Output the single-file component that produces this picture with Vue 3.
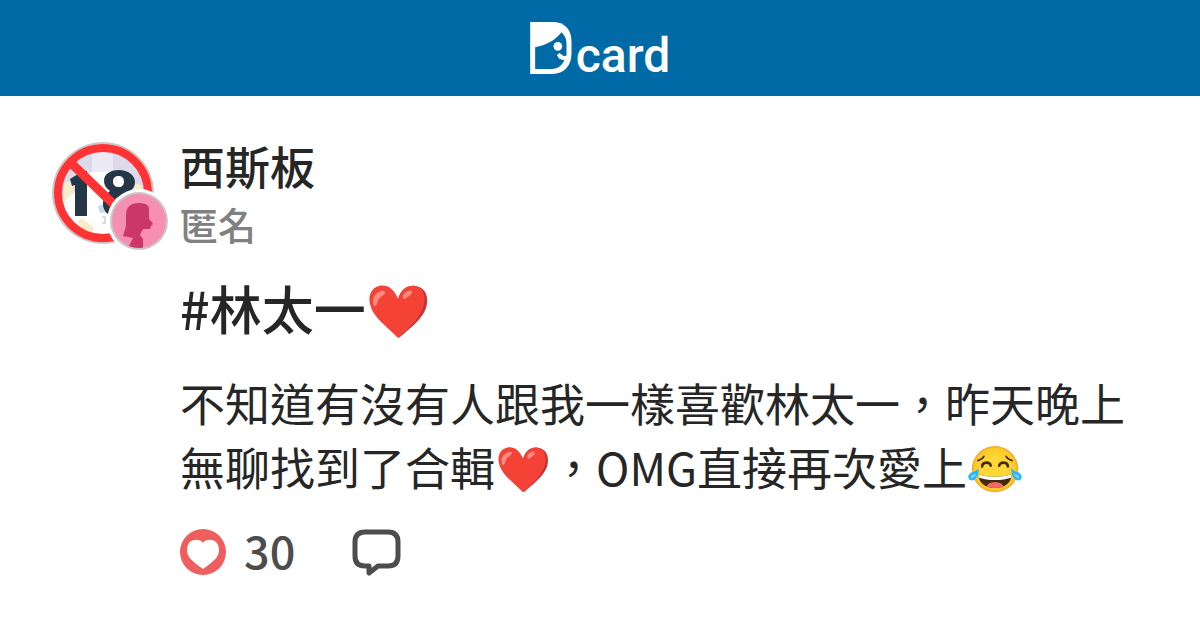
<script setup>
import { ref } from 'vue'

const post = {
  forum: '西斯板',
  author: '匿名',
  title: '#林太一',
  lead: '不知道有沒有人跟我一樣喜歡林太一，昨天晚上無聊找到了合輯',
  rest: '，OMG直接再次愛上',
}
const likes = ref(30)
</script>

<template>
  <div class="page">
    <header class="topbar">
      <a class="brand" href="#" aria-label="Dcard">
        <svg class="mark" viewBox="34 36 125 156" aria-hidden="true">
          <path fill="#fff" d="M34 36H100C138 36 158 58 158 95V130C158 168 136 192 100 192H34Z" />
          <path fill="#006aa6" d="M49 112C82 106 108 92 128 67C138 76 143 87 143 102V137L134 138L122 129L114 135L121 146L136 151C130 167 117 177 99 177H49Z" />
          <circle cx="117" cy="109" r="13" fill="#fff" />
        </svg>
        <span class="wordmark">card</span>
      </a>
    </header>

    <main class="post">
      <div class="avatar">
        <svg class="forum-icon" viewBox="0 0 102 102" aria-hidden="true">
          <defs>
            <clipPath id="forum-clip"><circle cx="51" cy="51" r="46" /></clipPath>
          </defs>
          <circle cx="51" cy="51" r="51" fill="#c8c8ca" />
          <circle cx="51" cy="51" r="49" fill="#fff" />
          <g clip-path="url(#forum-clip)">
            <path fill="#dcdaea" d="M0 0H102V52H76L60 34L35 38L21 52L0 62Z" />
            <path fill="#eceaf6" d="M40 0H61V30H40Z" />
            <path fill="#fff" d="M20 54L38 30H64L76 44L72 92H20L8 64Z" />
            <path fill="#f7edc8" d="M12 41L20 39L22 50L12 60ZM82 40L90 44L89 55L80 51ZM25 80L30 76L42 86L40 92L29 94Z" />
            <path fill="#c9d8e8" d="M46 64L52 62L57 70L48 71Z" />
            <path fill="none" stroke="#dcdcde" stroke-width="2" d="M50 75H53V81H50" />
          </g>
          <path fill="#243746" d="M31 29H35V74H23V43L20 44L18 37Z" />
          <path fill="#243746" fill-rule="evenodd" d="M67 28C76 28 83 33 83 40C83 45 80 48 77 50C82 53 85 57 85 63C85 71 77 76 68 76C58 76 51 70 51 62C51 56 54 52 58 49C54 46 52 43 52 39C52 32 58 28 67 28ZM67 34C63 34 61 36 61 39C61 43 63 45 67 45C70 45 72 43 72 39C72 36 70 34 67 34Z" />
          <path stroke="#ff3234" stroke-width="9" d="M18 20L82 82" />
          <circle cx="51" cy="51" r="45" fill="none" stroke="#ff3234" stroke-width="8" />
        </svg>
        <svg class="persona-icon" viewBox="0 0 64 64" aria-hidden="true">
          <defs>
            <clipPath id="persona-clip"><circle cx="32" cy="32" r="27" /></clipPath>
          </defs>
          <circle cx="32" cy="32" r="32" fill="#fff" />
          <circle cx="32" cy="32" r="29" fill="#c8c8ca" />
          <circle cx="32" cy="32" r="27" fill="#f78fb3" />
          <path clip-path="url(#persona-clip)" fill="#cb3768" d="M31 14C38 14 42 16 42 20V30L44 32L46 35L44 37L43 40H36L33 46L36 50V61H20L26 49L16 47L19 37V26C19 18 24 14 31 14Z" />
        </svg>
      </div>

      <article class="content">
        <div class="forum">{{ post.forum }}</div>
        <div class="author">{{ post.author }}</div>

        <h1 class="title">{{ post.title }}<svg class="emoji" viewBox="0 0 64 56" role="img" aria-label="紅心">
          <path fill="#c93234" d="M32 15C36 4 44 1 49 2C58 3 62 10 61 19C60 33 44 44 33 54Z" />
          <path fill="#f44336" d="M32 15C28 4 20 0 13 2C5 4 2 12 4 20C7 34 22 43 32 54C44 43 56 32 58 20C60 10 56 3 49 2C41 1 35 5 32 15Z" />
          <path fill="#ff8a80" d="M15 7C20 6 21 9 16 12C10 16 12 22 9 22C6 22 5 10 15 7ZM42 7C46 5 48 9 43 12C38 16 37 16 37 12C37 10 39 8 42 7Z" />
        </svg></h1>

        <p class="text">{{ post.lead }}<svg class="emoji" viewBox="0 0 64 56" role="img" aria-label="紅心">
          <path fill="#c93234" d="M32 15C36 4 44 1 49 2C58 3 62 10 61 19C60 33 44 44 33 54Z" />
          <path fill="#f44336" d="M32 15C28 4 20 0 13 2C5 4 2 12 4 20C7 34 22 43 32 54C44 43 56 32 58 20C60 10 56 3 49 2C41 1 35 5 32 15Z" />
          <path fill="#ff8a80" d="M15 7C20 6 21 9 16 12C10 16 12 22 9 22C6 22 5 10 15 7ZM42 7C46 5 48 9 43 12C38 16 37 16 37 12C37 10 39 8 42 7Z" />
        </svg>{{ post.rest }}<svg class="emoji" viewBox="0 0 64 56" role="img" aria-label="笑到流淚">
          <defs>
            <radialGradient id="joy-face">
              <stop offset="0.5" stop-color="#fdd835" />
              <stop offset="0.9" stop-color="#fbc829" />
              <stop offset="1" stop-color="#f0a025" />
            </radialGradient>
            <clipPath id="joy-mouth">
              <path d="M13 33C24 37 40 37 51 33C52 42 44 49 32 49C20 49 12 42 13 33Z" />
            </clipPath>
          </defs>
          <circle cx="32" cy="27" r="27" fill="url(#joy-face)" />
          <g clip-path="url(#joy-mouth)">
            <rect x="10" y="30" width="44" height="22" fill="#422b0d" />
            <path fill="#fff" d="M10 30H54V36C41 41 23 41 10 36Z" />
            <ellipse cx="32" cy="48" rx="10" ry="6" fill="#f06a6a" />
          </g>
          <g fill="none" stroke="#422b0d" stroke-linecap="round">
            <path stroke-width="3" d="M17 24C17 18 27 18 27 23M37 23C37 18 47 18 47 24" />
            <path stroke-width="2" d="M12 17C15 16 18 15 19 12M45 12C46 15 49 16 52 17" />
          </g>
          <path fill="#29b6f6" d="M13 26C13 36 9 41 4 40C0 39 0 34 3 32C5 30 10 30 13 26ZM51 26C51 36 55 41 60 40C64 39 64 34 61 32C59 30 54 30 51 26Z" />
          <path fill="#81d4fa" d="M4 35C6 33 9 33 10 32C9 36 6 37 4 38ZM60 35C58 33 55 33 54 32C55 36 58 37 60 38Z" />
        </svg></p>

        <footer class="actions">
          <button class="action" type="button" aria-label="喜歡" @click="likes++">
            <svg class="like" viewBox="0 0 46 46" aria-hidden="true">
              <circle cx="23" cy="23" r="23" fill="#ee5e5c" />
              <path fill="#fff" d="M23 14C20 9 7 9 7 21C7 28 12 32 23 40C34 32 39 28 39 21C39 9 26 9 23 14Z" />
            </svg>
            <span class="count">{{ likes }}</span>
          </button>
          <button class="action" type="button" aria-label="留言">
            <svg class="comment" viewBox="0 0 50 48" aria-hidden="true">
              <path fill="none" stroke="#4d4d4d" stroke-width="5" stroke-linejoin="round" d="M13 4H36Q46 4 46 14V28Q46 38 36 38H26L17 45V38H13Q3 38 3 28V14Q3 4 13 4Z" />
            </svg>
          </button>
        </footer>
      </article>
    </main>
  </div>
</template>

<style>
body {
  background: #fff;
}
</style>

<style scoped>
.page {
  color: #262626;
  font-family: "Noto Sans CJK TC", sans-serif;
}

.topbar {
  display: flex;
  justify-content: center;
  height: 96px;
  background: #006aa6;
}

.brand {
  display: flex;
  align-items: flex-start;
  gap: 4px;
  padding-top: 22px;
  color: #fff;
  text-decoration: none;
}

.mark {
  width: 42px;
  height: 52px;
}

.wordmark {
  font-family: Roboto, sans-serif;
  font-size: 48px;
  font-weight: 500;
  line-height: 68px;
}

.post {
  display: grid;
  grid-template-columns: 116px minmax(0, 1fr);
  gap: 12px;
  padding: 40px 52px 32px;
}

.avatar {
  position: relative;
  padding-top: 6px;
}

.forum-icon {
  display: block;
  width: 102px;
  height: 102px;
}

.persona-icon {
  position: absolute;
  top: 53px;
  left: 55px;
  width: 64px;
  height: 64px;
}

.forum {
  font-size: 45px;
  font-weight: 500;
  line-height: 60px;
}

.author {
  color: #808080;
  font-size: 38px;
  font-weight: 500;
  line-height: 56px;
}

.title {
  margin: 20px 0 0;
  font-size: 52px;
  font-weight: 500;
  line-height: 72px;
}

.text {
  margin: 27px 0 0;
  font-size: 45px;
  line-height: 64px;
}

.emoji {
  height: 48px;
  width: 56px;
  vertical-align: -8px;
}

.title .emoji {
  height: 56px;
  width: 64px;
  vertical-align: -10px;
}

.actions {
  display: flex;
  align-items: center;
  gap: 57px;
  margin-top: 21px;
}

.action {
  display: flex;
  align-items: center;
  gap: 18px;
  padding: 0;
  border: 0;
  background: none;
  color: #4d4d4d;
  font-family: inherit;
  font-size: 45px;
  font-weight: 500;
  line-height: 64px;
}

.count {
  padding-bottom: 4px;
  line-height: 60px;
}

.like {
  width: 46px;
  height: 46px;
}

.comment {
  width: 50px;
  height: 48px;
}
</style>
